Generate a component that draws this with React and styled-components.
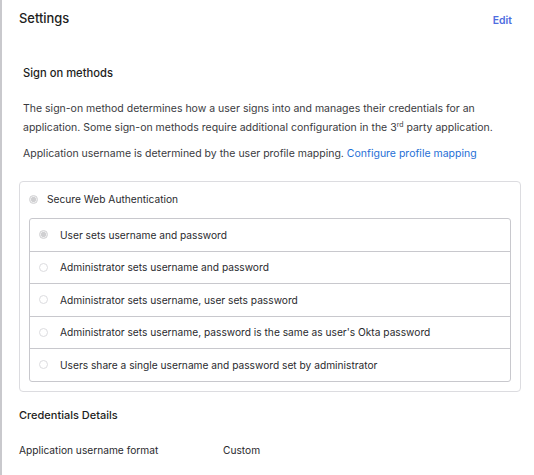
import React from 'react';
import styled, { createGlobalStyle } from 'styled-components';

// Global
const GlobalStyle = createGlobalStyle`
	html, body {
		margin: 0;
		background: #ffffff;
	}
	body {
		font-family: Inter, "Noto Sans", sans-serif;
		color: #1d1d21;
		-webkit-font-smoothing: antialiased;
	}
`;

// Data
const methods = [
	{ id: 'user', label: 'User sets username and password', checked: true },
	{ id: 'admin', label: 'Administrator sets username and password' },
	{ id: 'admin-user', label: 'Administrator sets username, user sets password' },
	{ id: 'okta', label: "Administrator sets username, password is the same as user's Okta password" },
	{ id: 'shared', label: 'Users share a single username and password set by administrator' },
];

// Component
const App = () => {
	return (
		<>
			<GlobalStyle/>
			<Page>
				<Header>
					<Title>Settings</Title>
					<EditLink href="#">Edit</EditLink>
				</Header>
				<Section>
					<SectionTitle>Sign on methods</SectionTitle>
					<Text>
						The sign-on method determines how a user signs into and manages their credentials for an<br/>
						application. Some sign-on methods require additional configuration in the 3<sup>rd</sup> party application.
					</Text>
					<Text>
						Application username is determined by the user profile mapping. <TextLink href="#">Configure profile mapping</TextLink>
					</Text>
				</Section>
				<OuterBox>
					<OptionLabel>
						<Radio checked/>
						Secure Web Authentication
					</OptionLabel>
					<InnerBox>
						{
							methods.map((method) => {
								return (
									<Row key={ method.id }>
										<Radio checked={ method.checked }/>
										{ method.label }
									</Row>
								);
							})
						}
					</InnerBox>
				</OuterBox>
				<DetailsTitle>Credentials Details</DetailsTitle>
				<DetailRow>
					<DetailKey>Application username format</DetailKey>
					<span>Custom</span>
				</DetailRow>
			</Page>
		</>
	);
};

// Styled
const Page = styled.div`
	min-height: 100vh;
	box-sizing: border-box;
	border-left: 2px solid #c9c9cd;
	padding: 0 13px 0 17px;
`;

const Header = styled.div`
	display: flex;
	justify-content: space-between;
	align-items: flex-start;
	padding: 9px 9px 0 0;
	height: 20px;
`;

const Title = styled.h2`
	margin: 0;
	font-size: 12.9px;
	font-weight: 500;
	line-height: 20px;
`;

const EditLink = styled.a`
	padding-top: 2px;
	font-size: 10.4px;
	font-weight: 600;
	line-height: 20px;
	color: #4e6de0;
	text-decoration: none;
`;

const Section = styled.div`
	padding: 36px 4px 0;
`;

const SectionTitle = styled.h3`
	margin: 0 0 17.5px;
	font-size: 11.2px;
	font-weight: 500;
	line-height: 16px;
`;

const Text = styled.p`
	margin: 0 0 7px;
	font-size: 10.5px;
	line-height: 19px;
	color: #3a3a3e;
	white-space: nowrap;
	sup {
		font-size: 7px;
		line-height: 0;
	}
`;

const TextLink = styled.a`
	color: #1f6fd6;
	text-decoration: none;
`;

const OuterBox = styled.div`
	margin-top: 18.5px;
	border: 1px solid #dcdce0;
	border-radius: 4px;
	padding: 8px 9px 9px;
`;

const OptionLabel = styled.div`
	display: flex;
	align-items: center;
	gap: 9px;
	height: 18px;
	font-size: 10.2px;
	color: #2a2a2e;
`;

const InnerBox = styled.div`
	margin-top: 10px;
	border: 1px solid #c8c8cd;
	border-radius: 3px;
`;

const Row = styled.div`
	display: flex;
	align-items: center;
	gap: 12px;
	height: 31.5px;
	padding-left: 9px;
	font-size: 10.2px;
	color: #2a2a2e;
	& + & {
		border-top: 1px solid #c8c8cd;
	}
`;

const Radio = styled.span`
	flex: none;
	box-sizing: border-box;
	width: 9px;
	height: 9px;
	border-radius: 50%;
	border: 1px solid ${ (props) => props.checked ? '#d2d2d4' : '#dcdcdf' };
	background: ${ (props) => props.checked ? 'radial-gradient(circle, #cfcfd1 0 2.2px, #eeeeef 2.7px)' : '#ffffff' };
`;

const DetailsTitle = styled.h3`
	margin: 15px 0 0;
	font-size: 11px;
	font-weight: 500;
	line-height: 16px;
`;

const DetailRow = styled.div`
	display: flex;
	margin-top: 19px;
	font-size: 10.2px;
	line-height: 16px;
	color: #2a2a2e;
`;

const DetailKey = styled.span`
	width: 204px;
`;

// Export
export default App;
